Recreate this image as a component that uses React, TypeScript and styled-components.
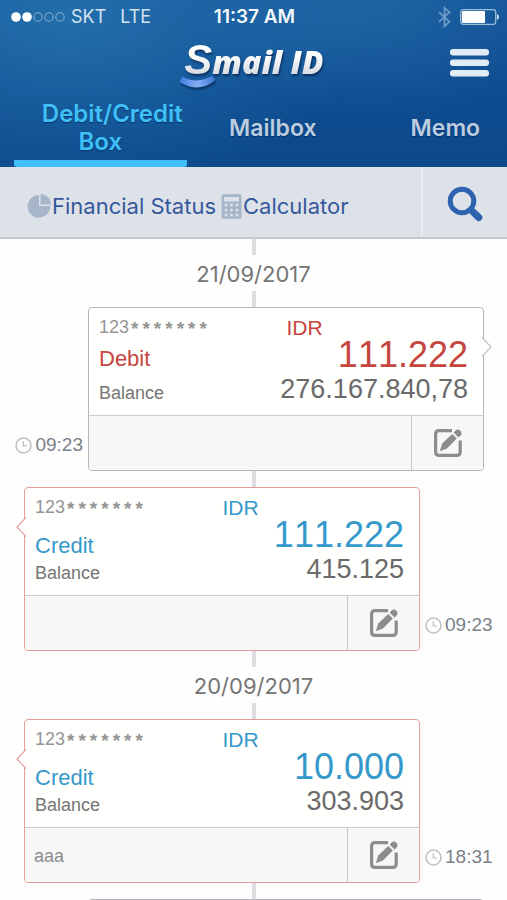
import React from "react";
import styled, { createGlobalStyle } from "styled-components";

const GlobalStyle = createGlobalStyle`
  * { box-sizing: border-box; }
  body { margin: 0; background: #fefefe; }
  button { font: inherit; border: 0; padding: 0; background: none; cursor: pointer; }
`;

const ui = `Inter, "Liberation Sans", sans-serif`;
const plain = `"Liberation Sans", Arial, sans-serif`;

type Kind = "debit" | "credit";

const Screen = styled.div`
  display: flex;
  flex-direction: column;
  height: 100vh;
  overflow: hidden;
  background: #fefefe;
  font-family: ${plain};
`;

const Header = styled.header`
  flex: none;
  background:
    radial-gradient(ellipse 300px 170px at 70px 20px, rgba(46, 126, 184, 0.6), rgba(46, 126, 184, 0)),
    radial-gradient(ellipse 180px 110px at 370px 10px, rgba(40, 112, 172, 0.5), rgba(40, 112, 172, 0)),
    linear-gradient(#15579a, #0d4c8f 60%, #0c498b);
`;

const StatusBar = styled.div`
  display: grid;
  grid-template-columns: 1fr auto 1fr;
  align-items: center;
  height: 34px;
  padding: 0 8px 0 10px;
  color: #d5e3f1;
  font: 400 18px/34px ${ui};
`;

const Carrier = styled.div`
  display: flex;
  align-items: center;
  gap: 5px;
`;

const Network = styled.span`
  margin-left: 9px;
`;

const Clock = styled.time`
  color: #f4f8fc;
  font-size: 19px;
  font-weight: 600;
  font-kerning: none;
`;

const Indicators = styled.div`
  display: flex;
  align-items: center;
  justify-content: flex-end;
  gap: 9px;
`;

const Brand = styled.div`
  display: grid;
  grid-template-columns: 58px 1fr 58px;
  align-items: center;
  height: 62px;
`;

const Logo = styled.h1`
  grid-column: 2;
  justify-self: center;
  position: relative;
  margin: 0;
  height: 56px;
  padding: 0 0 0 5px;
  filter: drop-shadow(1px 2px 1px rgba(4, 30, 70, 0.7));
`;

const LogoText = styled.span`
  position: relative;
  display: block;
  padding-right: 4px;
  font: italic 800 32px/50px "Open Sans", ${plain};
  white-space: nowrap;
  color: transparent;
  background: linear-gradient(#ffffff 35%, #d3d7dd 80%);
  background-clip: text;
  -webkit-background-clip: text;
`;

const LogoInitial = styled.span`
  font-family: ${plain};
  font-size: 42px;
  line-height: 40px;
`;

const Swoosh = styled.svg`
  position: absolute;
  left: 0;
  top: 38px;
`;

const MenuButton = styled.button`
  grid-column: 3;
  justify-self: start;
  height: 34px;
`;

const Tabs = styled.nav`
  display: flex;
  height: 71px;
  padding-left: 14px;
  overflow: hidden;
`;

const Tab = styled.a<{ $active?: boolean }>`
  flex: 0 0 35%;
  display: flex;
  align-items: center;
  justify-content: center;
  padding-bottom: ${(p) => (p.$active ? 0 : 7)}px;
  border-bottom: ${(p) => (p.$active ? "7px solid #3fbff8" : "0")};
  border-radius: 3px;
  color: ${(p) => (p.$active ? "#40c0f8" : "#bccde2")};
  font: 600 ${(p) => (p.$active ? 24 : 23)}px/28px ${ui};
  text-align: center;
  text-indent: ${(p) => (p.$active ? 24 : 0)}px;
  text-decoration: none;
  text-shadow: 0 1px 1px rgba(4, 32, 76, 0.6);
`;

const Toolbar = styled.div`
  flex: none;
  display: flex;
  align-items: stretch;
  height: 72px;
  background: #dde2e9;
  border-bottom: 2px solid #c5c9ce;
`;

const Tools = styled.div`
  flex: 1;
  display: flex;
  align-items: center;
  gap: 5px;
  padding: 8px 0 0 27px;
`;

const Tool = styled.button`
  display: flex;
  align-items: center;
  gap: 1px;
  color: #35589c;
  font: 400 22px/28px ${ui};
  white-space: nowrap;
`;

const SearchButton = styled.button`
  width: 86px;
  display: flex;
  align-items: center;
  justify-content: center;
  padding-top: 4px;
  border-left: 2px solid #e8ebf0;
`;

const Timeline = styled.main`
  flex: 1;
  min-height: 0;
  overflow: hidden;
`;

const Connector = styled.div`
  width: 4px;
  height: 16px;
  margin: 0 auto;
  background: #dcdee1;
`;

const DateHeading = styled.h2`
  margin: 0;
  padding-top: 2px;
  color: #757575;
  font: 400 22px/34px ${ui};
  text-align: center;
`;

const Row = styled.section<{ $kind: Kind }>`
  display: grid;
  grid-template-columns: ${(p) => (p.$kind === "debit" ? "88px 1fr 23px" : "24px 1fr 87px")};
`;

const Card = styled.article<{ $kind: Kind }>`
  grid-column: 2;
  grid-row: 1;
  position: relative;
  min-height: 164px;
  border: 1px solid ${(p) => (p.$kind === "debit" ? "#b4b6b9" : "#e39f9b")};
  border-radius: 4px;
  background: #fffffd;
`;

const Arrow = styled.svg<{ $kind: Kind }>`
  position: absolute;
  top: 29px;
  ${(p) => (p.$kind === "debit" ? "right: -9px;" : "left: -9px; transform: scaleX(-1);")}
`;

const Body = styled.div`
  display: grid;
  grid-template-columns: minmax(0, 1fr) minmax(0, 1fr);
  padding: 10px 15px 9px 10px;
`;

const Names = styled.div`
  display: flex;
  flex-direction: column;
  color: #757575;
`;

const Account = styled.span`
  display: block;
  height: 20px;
  color: #959595;
  font: 400 18px/18px ${plain};
  white-space: nowrap;
`;

const Stars = styled.span`
  vertical-align: -2px;
  font: 700 19px/16px "Liberation Mono", monospace;
`;

const tone = { debit: "#c6453f", credit: "#3599cc" };

const KindLabel = styled.span<{ $kind: Kind }>`
  display: flex;
  align-items: ${(p) => (p.$kind === "debit" ? "center" : "flex-end")};
  height: 42px;
  color: ${(p) => tone[p.$kind]};
  font-size: 22px;
  line-height: 28px;
`;

const BalanceLabel = styled.span`
  font-size: 18px;
  line-height: 26px;
`;

const Figures = styled.div`
  display: flex;
  flex-direction: column;
  align-items: flex-end;
  white-space: nowrap;
  font-kerning: none;
`;

const Currency = styled.span<{ $kind: Kind }>`
  align-self: flex-start;
  padding-left: 3px;
  color: ${(p) => tone[p.$kind]};
  font-size: 21px;
  line-height: 20px;
`;

const Amount = styled.span<{ $kind: Kind }>`
  color: ${(p) => tone[p.$kind]};
  font-size: 36px;
  line-height: 34px;
`;

const Balance = styled.span`
  color: #6a6a6a;
  font-size: 27px;
  line-height: 34px;
`;

const Footer = styled.footer`
  display: flex;
  height: 55px;
  border-top: 1px solid #cbccce;
  border-radius: 0 0 3px 3px;
  background: #f7f7f7;
`;

const Note = styled.p`
  flex: 1;
  margin: 0;
  padding: 3px 9px 0;
  color: #8c8c8c;
  font-size: 18px;
  line-height: 51px;
`;

const EditButton = styled.button`
  width: 72px;
  display: flex;
  align-items: center;
  justify-content: center;
  border-left: 1px solid #c6c7c9;
`;

const TimeMark = styled.div<{ $kind: Kind }>`
  grid-column: ${(p) => (p.$kind === "debit" ? 1 : 3)};
  grid-row: 1;
  align-self: end;
  display: flex;
  align-items: center;
  justify-content: ${(p) => (p.$kind === "debit" ? "flex-end" : "flex-start")};
  gap: 3px;
  height: 52px;
  padding: 0 5px;
  color: #7b8087;
  font-size: 19px;
`;

const SignalDots = () => (
  <svg width="56" height="12" viewBox="0 0 56 12" aria-label="Signal">
    {[0, 1, 2, 3, 4].map((i) => (
      <circle
        key={i}
        cx={6 + i * 11}
        cy="6"
        r={i < 2 ? 4.8 : 4.2}
        fill={i < 2 ? "#fff" : "none"}
        stroke={i < 2 ? "none" : "#86add0"}
        strokeWidth="1.1"
      />
    ))}
  </svg>
);

const Bluetooth = () => (
  <svg width="13" height="22" viewBox="0 0 13 22" fill="none" stroke="#6f9cc6" strokeWidth="1.7" aria-label="Bluetooth">
    <path d="M1 6.2L11.5 15.8L6.5 20.3V1.7L11.5 6.2L1 15.8" />
  </svg>
);

const Battery = () => (
  <svg width="39" height="16" viewBox="0 0 39 16" aria-label="Battery">
    <rect x="0.7" y="0.7" width="35" height="14.6" rx="2.5" fill="none" stroke="#9dbcd9" strokeWidth="1.3" />
    <rect x="2" y="2" width="23" height="12" rx="1" fill="#fff" />
    <path d="M37 5.2c1.2.3 1.8 1.4 1.8 2.8s-.6 2.5-1.8 2.8z" fill="#dce8f3" />
  </svg>
);

const MenuIcon = () => (
  <svg width="40" height="30" viewBox="0 0 40 30" fill="#e3ebf6" aria-hidden="true">
    <rect x="1" y="1" width="39" height="6.6" rx="3" />
    <rect x="1" y="11.5" width="39" height="6.6" rx="3" />
    <rect x="1" y="22" width="39" height="6.6" rx="3" />
  </svg>
);

const PieIcon = () => (
  <svg width="24" height="24" viewBox="0 0 24 24" fill="#a6b5c9" aria-hidden="true">
    <path d="M12 1A11.3 11.3 0 1 0 23.3 12H12z" />
    <path d="M13.5 0A10.5 10.5 0 0 1 24 10.5H13.5z" />
  </svg>
);

const CalculatorIcon = () => (
  <svg width="21" height="25" viewBox="0 0 21 25" aria-hidden="true">
    <rect x="0.5" y="0.3" width="20" height="24.4" rx="1.5" fill="#a6b5c9" />
    <rect x="3" y="3" width="15" height="4.5" rx="0.8" fill="#dde2e9" />
    {[11, 16, 21].map((y) =>
      [5, 10.5, 16].map((x) => <circle key={`${x}-${y}`} cx={x} cy={y} r="1.5" fill="#dde2e9" />)
    )}
  </svg>
);

const SearchIcon = () => (
  <svg width="36" height="36" viewBox="0 0 36 36" fill="none" stroke="#2e62af" aria-hidden="true">
    <circle cx="15" cy="15" r="11.8" strokeWidth="5" />
    <path d="M23.5 23.5L31 30.7" strokeWidth="7" />
    <path d="M30.5 30.2L31.8 31.5" strokeWidth="7" strokeLinecap="round" />
  </svg>
);

const EditIcon = () => (
  <svg width="30" height="30" viewBox="0 0 30 30" aria-hidden="true">
    <path
      d="M19 2.6H6Q2.6 2.6 2.6 6V24Q2.6 27.4 6 27.4H23.8Q27.2 27.4 27.2 24V12.5"
      fill="none"
      stroke="#8d8d8d"
      strokeWidth="3.2"
    />
    <path d="M6.8 23.2L9.2 15.4L19.2 6L23.8 10.6L14 20.4z" fill="#8d8d8d" />
    <path d="M20.6 4.6L22.6 2.6Q25 .6 27.4 2.7Q29.6 5.1 27.6 7.5L25.4 9.4z" fill="#8d8d8d" />
  </svg>
);

const ClockIcon = () => (
  <svg width="17" height="17" viewBox="0 0 17 17" fill="none" stroke="#bfc1c3" aria-hidden="true">
    <circle cx="8.5" cy="8.5" r="7.5" strokeWidth="1.6" />
    <path d="M8.3 4.2V8.8H11.8" strokeWidth="1.3" />
  </svg>
);

interface Entry {
  kind: Kind;
  amount: string;
  balance: string;
  time: string;
  note?: string;
}

const days: { date: string; entries: Entry[] }[] = [
  {
    date: "21/09/2017",
    entries: [
      { kind: "debit", amount: "111.222", balance: "276.167.840,78", time: "09:23" },
      { kind: "credit", amount: "111.222", balance: "415.125", time: "09:23" },
    ],
  },
  {
    date: "20/09/2017",
    entries: [{ kind: "credit", amount: "10.000", balance: "303.903", time: "18:31", note: "aaa" }],
  },
];

const Transaction = ({ kind, amount, balance, time, note }: Entry) => (
  <Row $kind={kind}>
    <Card $kind={kind}>
      <Arrow $kind={kind} width="10" height="20" viewBox="0 0 10 20" aria-hidden="true">
        <path
          d="M0 0L0.5 1L9 10L0.5 19L0 20"
          fill="#fffffd"
          stroke={kind === "debit" ? "#bcbec0" : "#e39f9b"}
          strokeWidth="1.1"
        />
      </Arrow>
      <Body>
        <Names>
          <Account>
            123<Stars>*******</Stars>
          </Account>
          <KindLabel $kind={kind}>{kind === "debit" ? "Debit" : "Credit"}</KindLabel>
          <BalanceLabel>Balance</BalanceLabel>
        </Names>
        <Figures>
          <Currency $kind={kind}>IDR</Currency>
          <Amount $kind={kind}>{amount}</Amount>
          <Balance>{balance}</Balance>
        </Figures>
      </Body>
      <Footer>
        <Note>{note}</Note>
        <EditButton type="button" aria-label="Edit note">
          <EditIcon />
        </EditButton>
      </Footer>
    </Card>
    <TimeMark $kind={kind}>
      <ClockIcon />
      <time>{time}</time>
    </TimeMark>
  </Row>
);

export default function App() {
  return (
    <Screen>
      <GlobalStyle />
      <Header>
        <StatusBar>
          <Carrier>
            <SignalDots />
            <span>SKT</span>
            <Network>LTE</Network>
          </Carrier>
          <Clock>11:37 AM</Clock>
          <Indicators>
            <Bluetooth />
            <Battery />
          </Indicators>
        </StatusBar>
        <Brand>
          <Logo>
            <Swoosh width="38" height="14" viewBox="0 0 38 14" aria-hidden="true">
              <defs>
                <linearGradient id="swoosh">
                  <stop offset="0" stopColor="#3f7ddc" />
                  <stop offset="0.5" stopColor="#86aef5" />
                  <stop offset="1" stopColor="#3d77d6" />
                </linearGradient>
              </defs>
              <path d="M3 1.5Q18 9.500 33 1L36.500 5Q20 19 .5 7z" fill="url(#swoosh)" />
            </Swoosh>
            <LogoText>
              <LogoInitial>S</LogoInitial>mail ID
            </LogoText>
          </Logo>
          <MenuButton type="button" aria-label="Menu">
            <MenuIcon />
          </MenuButton>
        </Brand>
        <Tabs>
          <Tab href="#box" $active>
            Debit/Credit Box
          </Tab>
          <Tab href="#mailbox">Mailbox</Tab>
          <Tab href="#memo">Memo</Tab>
        </Tabs>
      </Header>
      <Toolbar>
        <Tools>
          <Tool type="button">
            <PieIcon />
            Financial Status
          </Tool>
          <Tool type="button">
            <CalculatorIcon />
            Calculator
          </Tool>
        </Tools>
        <SearchButton type="button" aria-label="Search">
          <SearchIcon />
        </SearchButton>
      </Toolbar>
      <Timeline>
        {days.map((day) => (
          <React.Fragment key={day.date}>
            <Connector />
            <DateHeading>{day.date}</DateHeading>
            {day.entries.map((entry, i) => (
              <React.Fragment key={i}>
                <Connector />
                <Transaction {...entry} />
              </React.Fragment>
            ))}
          </React.Fragment>
        ))}
        <Connector />
        <Row $kind="debit">
          <Card $kind="debit" />
        </Row>
      </Timeline>
    </Screen>
  );
}
